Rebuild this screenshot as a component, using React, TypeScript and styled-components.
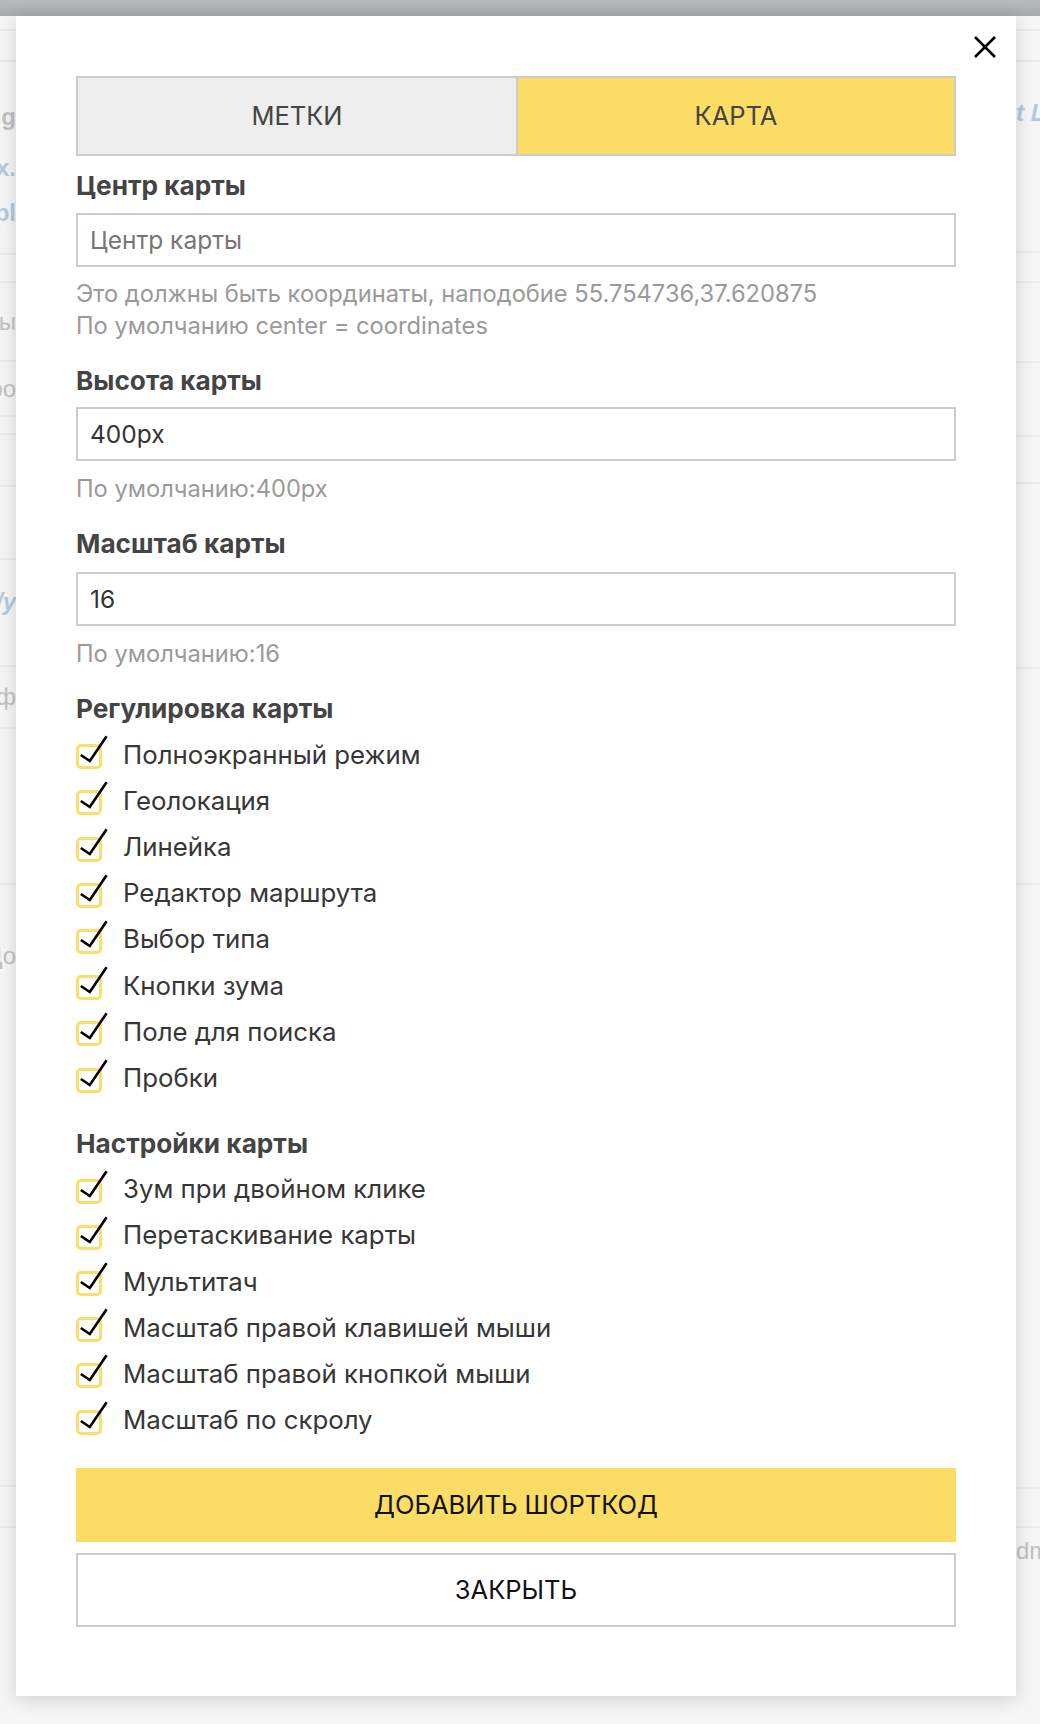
import React from "react";
import styled, { createGlobalStyle } from "styled-components";

const GlobalStyle = createGlobalStyle`
  html, body { margin: 0; padding: 0; }
  body {
    background: #f6f6f6;
    font-family: Inter, "Liberation Sans", Arial, sans-serif;
  }
  * { box-sizing: border-box; }
`;

const YELLOW = "#fbdc64";
const FONT = `Inter, "Liberation Sans", Arial, sans-serif`;

const Page = styled.div`
  width: 1040px;
  min-height: 1724px;
  display: flex;
  flex-direction: column;
  background: #f7f7f7;
`;

const TopBar = styled.div`
  height: 16px;
  background: linear-gradient(#b9babb, #a9aaab);
  flex: none;
`;

const Stage = styled.div`
  display: flex;
  flex: 1;
`;

const Gutter = styled.div<{ $side: "left" | "right" }>`
  width: ${(p) => (p.$side === "left" ? 16 : 24)}px;
  flex: none;
  display: flex;
  flex-direction: column;
  overflow: hidden;
  background: #f6f6f6;
`;

const GutterRow = styled.div<{ $h: number; $line?: boolean; $align: "left" | "right" }>`
  height: ${(p) => p.$h}px;
  flex: none;
  display: flex;
  align-items: center;
  justify-content: ${(p) => (p.$align === "left" ? "flex-end" : "flex-start")};
  overflow: hidden;
  white-space: nowrap;
  border-bottom: ${(p) => (p.$line ? "2px solid #ececec" : "none")};
`;

const Ghost = styled.span<{ $blue?: boolean; $italic?: boolean; $bold?: boolean }>`
  font-family: "Liberation Sans", Arial, sans-serif;
  font-size: 24px;
  color: ${(p) => (p.$blue ? "#b3cade" : "#c2c2c2")};
  font-style: ${(p) => (p.$italic ? "italic" : "normal")};
  font-weight: ${(p) => (p.$bold ? 700 : 400)};
  flex: none;
`;

const Modal = styled.div`
  width: 1000px;
  height: 1680px;
  flex: none;
  background: #fff;
  box-shadow: 0 4px 18px rgba(0, 0, 0, 0.16);
  padding: 20px 60px 69px;
  display: flex;
  flex-direction: column;
  position: relative;
  z-index: 1;
`;

const Header = styled.div`
  height: 40px;
  display: flex;
  justify-content: flex-end;
  align-items: flex-start;
  margin-right: -41px;
`;

const CloseX = styled.button`
  width: 24px;
  height: 22px;
  padding: 0;
  border: 0;
  background: transparent;
  display: flex;
  cursor: pointer;
`;

const Tabs = styled.div`
  display: grid;
  grid-template-columns: 1fr 1fr;
  height: 80px;
  border: 2px solid #cccccc;
  flex: none;
`;

const Tab = styled.div<{ $active?: boolean }>`
  display: flex;
  align-items: center;
  justify-content: center;
  font-size: 25.5px;
  color: #444;
  background: ${(p) => (p.$active ? YELLOW : "#eeeeee")};
  border-left: ${(p) => (p.$active ? "2px solid #cccccc" : "none")};
`;

const Label = styled.div<{ $mt: number }>`
  margin-top: ${(p) => p.$mt}px;
  font-size: 26.2px;
  line-height: 30px;
  font-weight: 700;
  color: #444;
`;

const Input = styled.input<{ $mt: number }>`
  margin-top: ${(p) => p.$mt}px;
  height: 55px;
  width: 100%;
  border: 2px solid #cccccc;
  padding: 0 12px;
  font-family: ${FONT};
  font-size: 24.5px;
  color: #333;
  background: #fff;
  outline: none;
  &::placeholder { color: #767676; }
`;

const Help = styled.div<{ $mt: number }>`
  margin-top: ${(p) => p.$mt}px;
  font-size: 23.7px;
  line-height: 32px;
  color: #9a9a9a;
`;

const CheckList = styled.div<{ $mt: number }>`
  margin-top: ${(p) => p.$mt}px;
  display: flex;
  flex-direction: column;
`;

const CheckRow = styled.label`
  height: 46.2px;
  display: flex;
  align-items: center;
  gap: 15px;
  font-size: 25.8px;
  color: #363636;
  cursor: pointer;
`;

const CheckIcon = styled.svg`
  flex: none;
  width: 32px;
  height: 36px;
  margin-top: -4px;
`;

const Button = styled.button<{ $primary?: boolean; $mt: number }>`
  margin-top: ${(p) => p.$mt}px;
  height: 75px;
  width: 100%;
  font-family: ${FONT};
  font-size: 25.5px;
  color: #111;
  background: ${(p) => (p.$primary ? YELLOW : "#fff")};
  border: ${(p) => (p.$primary ? "none" : "2px solid #cccccc")};
  cursor: pointer;
`;

const Checkbox: React.FC = () => (
  <CheckIcon viewBox="0 0 32 36" aria-hidden>
    <rect x="1.5" y="11.5" width="23" height="22" rx="3.5" fill="#fff" stroke="#fcde6a" strokeWidth="3" />
    <path d="M4.8 21 L13.8 27 L30.6 2.2" fill="none" stroke="#000" strokeWidth="2.6" strokeLinejoin="miter" />
  </CheckIcon>
);

const controls = [
  "Полноэкранный режим",
  "Геолокация",
  "Линейка",
  "Редактор маршрута",
  "Выбор типа",
  "Кнопки зума",
  "Поле для поиска",
  "Пробки",
];

const settings = [
  "Зум при двойном клике",
  "Перетаскивание карты",
  "Мультитач",
  "Масштаб правой клавишей мыши",
  "Масштаб правой кнопкой мыши",
  "Масштаб по скролу",
];

type GhostRow = { h: number; text?: string; blue?: boolean; italic?: boolean; bold?: boolean; line?: boolean };

const leftGhost: GhostRow[] = [
  { h: 15, line: true },
  { h: 31, line: true },
  { h: 38 },
  { h: 34, text: "Plug", bold: true },
  { h: 18 },
  { h: 32, text: "ex.", blue: true, bold: true },
  { h: 14 },
  { h: 30, text: "Exampl", blue: true, bold: true },
  { h: 27, line: true },
  { h: 28, line: true },
  { h: 79, text: "Типы", line: true },
  { h: 55, text: "Подро", line: true },
  { h: 18, line: true },
  { h: 52, line: true },
  { h: 73, line: true },
  { h: 15 },
  { h: 54, text: "ru/y", blue: true, italic: true, bold: true },
  { h: 38, line: true },
  { h: 62, text: "Оф", line: true },
  { h: 156, line: true },
  { h: 45 },
  { h: 52, text: "До" },
  { h: 505, line: true },
  { h: 41, line: true },
  { h: 60 },
];

const rightGhost: GhostRow[] = [
  { h: 15, line: true },
  { h: 31, line: true },
  { h: 28 },
  { h: 46, text: "t Loc", blue: true, italic: true, bold: true },
  { h: 117, line: true },
  { h: 30, line: true },
  { h: 80, line: true },
  { h: 74, line: true },
  { h: 47, line: true },
  { h: 185, line: true },
  { h: 216, line: true },
  { h: 604, line: true },
  { h: 39, line: true },
  { h: 45, text: "dmin" },
];

const App: React.FC = () => {
  return (
    <>
      <GlobalStyle />
      <Page>
        <TopBar />
        <Stage>
          <Gutter $side="left">
            {leftGhost.map((g, i) => (
              <GutterRow key={i} $h={g.h} $line={g.line} $align="left">
                {g.text && (
                  <Ghost $blue={g.blue} $italic={g.italic} $bold={g.bold}>
                    {g.text}
                  </Ghost>
                )}
              </GutterRow>
            ))}
          </Gutter>
          <Modal>
            <Header>
              <CloseX aria-label="Закрыть">
                <svg width="24" height="22" viewBox="0 0 24 22">
                  <path d="M2 1 L22 21 M22 1 L2 21" stroke="#000" strokeWidth="2.6" fill="none" />
                </svg>
              </CloseX>
            </Header>
            <Tabs>
              <Tab>МЕТКИ</Tab>
              <Tab $active>КАРТА</Tab>
            </Tabs>

            <Label $mt={15}>Центр карты</Label>
            <Input $mt={12} placeholder="Центр карты" />
            <Help $mt={11}>
              Это должны быть координаты, наподобие 55.754736,37.620875
              <br />
              По умолчанию center = coordinates
            </Help>

            <Label $mt={24}>Высота карты</Label>
            <Input $mt={11} defaultValue="400px" />
            <Help $mt={12}>По умолчанию:400px</Help>

            <Label $mt={24}>Масштаб карты</Label>
            <Input $mt={12.5} defaultValue="16" />
            <Help $mt={12}>По умолчанию:16</Help>

            <Label $mt={24}>Регулировка карты</Label>
            <CheckList $mt={7}>
              {controls.map((c) => (
                <CheckRow key={c}>
                  <Checkbox />
                  {c}
                </CheckRow>
              ))}
            </CheckList>

            <Label $mt={28}>Настройки карты</Label>
            <CheckList $mt={7}>
              {settings.map((c) => (
                <CheckRow key={c}>
                  <Checkbox />
                  {c}
                </CheckRow>
              ))}
            </CheckList>

            <Button $primary $mt={25}>ДОБАВИТЬ ШОРТКОД</Button>
            <Button $mt={11}>ЗАКРЫТЬ</Button>
          </Modal>
          <Gutter $side="right">
            {rightGhost.map((g, i) => (
              <GutterRow key={i} $h={g.h} $line={g.line} $align="right">
                {g.text && (
                  <Ghost $blue={g.blue} $italic={g.italic} $bold={g.bold}>
                    {g.text}
                  </Ghost>
                )}
              </GutterRow>
            ))}
          </Gutter>
        </Stage>
      </Page>
    </>
  );
};

export default App;
